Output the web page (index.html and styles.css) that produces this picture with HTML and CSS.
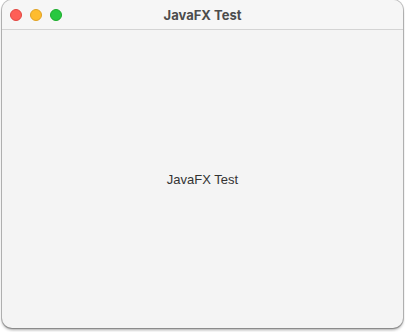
FILE: index.html
```html
<!DOCTYPE html>
<html>
<head>
<meta charset="utf-8">
<link rel="stylesheet" href="styles.css">
</head>
<body>
<div class="window">
  <div class="titlebar">
    <div class="lights">
      <span class="light red"></span>
      <span class="light yellow"></span>
      <span class="light green"></span>
    </div>
    <div class="title">JavaFX Test</div>
  </div>
  <div class="content">
    <div class="label">JavaFX Test</div>
  </div>
</div>
</body>
</html>
```
FILE: styles.css
```css
html, body {
  margin: 0;
  padding: 0;
  background: #ffffff;
  width: 405px;
  height: 332px;
  overflow: hidden;
}
.window {
  margin-left: 2px;
  width: 401px;
  height: 328px;
  border-radius: 10px;
  background: #f4f4f4;
  box-shadow: 0 0 0 1px rgba(0,0,0,0.22), 0 2px 3px rgba(0,0,0,0.35);
  overflow: hidden;
  display: flex;
  flex-direction: column;
  font-family: "Inter", "Liberation Sans", sans-serif;
}
.titlebar {
  height: 29px;
  flex: none;
  background: #f6f6f6;
  border-bottom: 1px solid #d4d4d4;
  position: relative;
  display: flex;
  align-items: center;
  justify-content: center;
}
.lights {
  position: absolute;
  left: 8px;
  top: 9px;
  display: flex;
  gap: 8px;
}
.light {
  width: 12px;
  height: 12px;
  border-radius: 50%;
  box-sizing: border-box;
}
.red { background: #fe5f57; border: 0.5px solid #e14640; }
.yellow { background: #febc2e; border: 0.5px solid #dfa123; }
.green { background: #28c840; border: 0.5px solid #1aab29; }
.title {
  font-size: 13px;
  font-weight: 700;
  color: #4c4c4c;
  margin-top: 1px;
}
.content {
  flex: 1;
  display: flex;
  align-items: center;
  justify-content: center;
}
.label {
  font-family: "Liberation Sans", Arial, sans-serif;
  font-size: 13px;
  color: #333333;
  margin-top: 0;
}
```
